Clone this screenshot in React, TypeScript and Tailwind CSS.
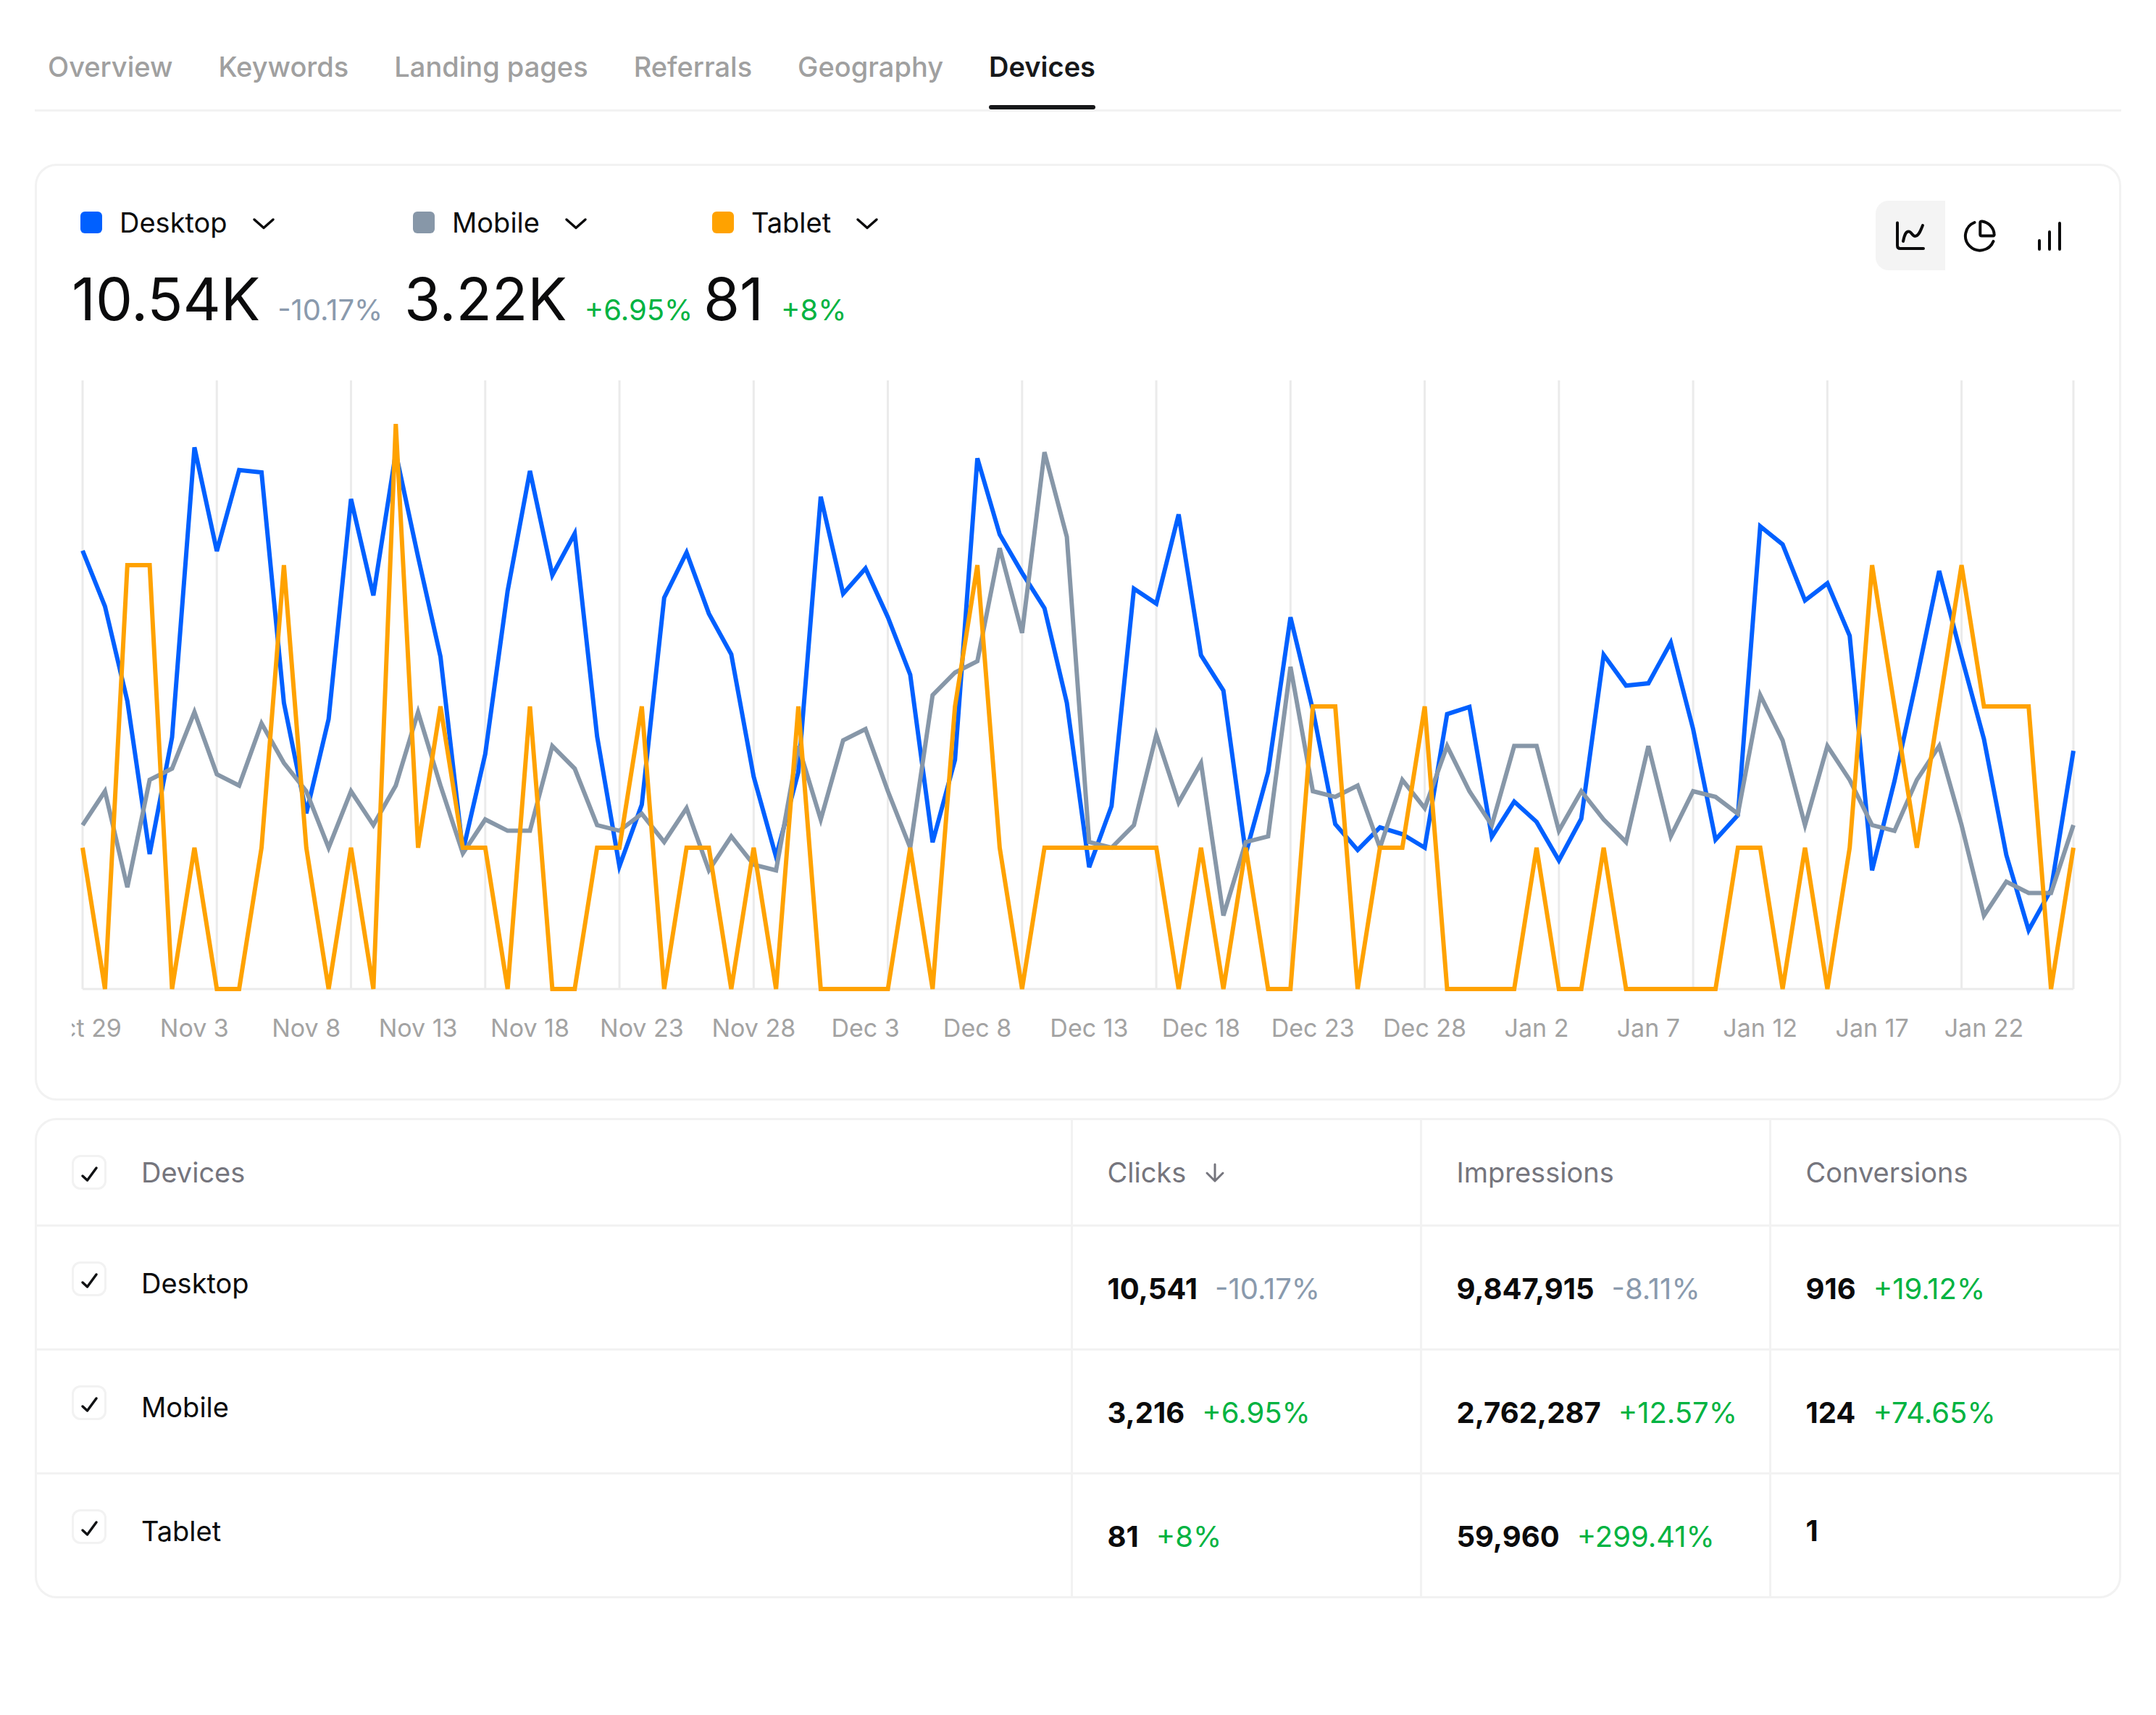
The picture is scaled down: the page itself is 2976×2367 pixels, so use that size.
import React, { useState } from 'react';

interface Series {
    name: string;
    stroke: string;
    max: number;
    values: number[];
}

interface Metric {
    value: string;
    change?: string;
}

interface DeviceRow {
    name: string;
    metrics: Metric[];
}

const tabs = ['Overview', 'Keywords', 'Landing pages', 'Referrals', 'Geography', 'Devices'];

const summary = [
    { name: 'Desktop', swatch: 'bg-[#0060ff]', total: '10.54K', change: '-10.17%' },
    { name: 'Mobile', swatch: 'bg-[#8797a8]', total: '3.22K', change: '+6.95%' },
    { name: 'Tablet', swatch: 'bg-[#ffa200]', total: '81', change: '+8%' },
];

const series: Series[] = [
    {
        name: 'Desktop',
        stroke: '#0060ff',
        max: 1344,
        values: [
            968, 845, 636, 298, 556, 1196, 967, 1146, 1141, 632, 388, 596, 1082, 869, 1184,
            954, 734, 304, 519, 879, 1144, 914, 1006, 558, 271, 407, 864, 964, 829, 739,
            469, 292, 479, 1087, 873, 929, 821, 694, 324, 506, 1172, 1004, 919, 841, 632,
            269, 404, 884, 851, 1048, 737, 659, 299, 479, 821, 616, 364, 307, 357, 342,
            312, 607, 623, 336, 414, 369, 284, 376, 738, 670, 675, 765, 574, 330, 384,
            1022, 982, 858, 896, 780, 262, 459, 686, 923, 734, 552, 296, 130, 219, 526,
        ],
    },
    {
        name: 'Mobile',
        stroke: '#8797a8',
        max: 107.7,
        values: [
            29, 35, 18, 37, 39, 49, 38, 36, 47, 40, 35, 25, 35, 29, 36,
            49, 36, 24, 30, 28, 28, 43, 39, 29, 28, 31, 26, 32, 21, 27,
            22, 21, 43, 30, 44, 46, 35, 25, 52, 56, 58, 78, 63, 95, 80,
            26, 25, 29, 45, 33, 40, 13, 26, 27, 57, 35, 34, 36, 25, 37,
            32, 43, 35, 29, 43, 43, 28, 35, 30, 26, 43, 27, 35, 34, 31,
            52, 44, 29, 43, 37, 29, 28, 37, 43, 29, 13, 19, 17, 17, 29,
        ],
    },
    {
        name: 'Tablet',
        stroke: '#ffa200',
        max: 4.308,
        values: [
            1, 0, 3, 3, 0, 1, 0, 0, 1, 3, 1, 0, 1, 0, 4,
            1, 2, 1, 1, 0, 2, 0, 0, 1, 1, 2, 0, 1, 1, 0,
            1, 0, 2, 0, 0, 0, 0, 1, 0, 2, 3, 1, 0, 1, 1,
            1, 1, 1, 1, 0, 1, 0, 1, 0, 0, 2, 2, 0, 1, 1,
            2, 0, 0, 0, 0, 1, 0, 0, 1, 0, 0, 0, 0, 0, 1,
            1, 0, 1, 0, 1, 3, 2, 1, 2, 3, 2, 2, 2, 0, 1,
        ],
    },
];

// one label for every fifth day
const dayLabels = [
    'Oct 29', 'Nov 3', 'Nov 8', 'Nov 13', 'Nov 18', 'Nov 23', 'Nov 28', 'Dec 3', 'Dec 8',
    'Dec 13', 'Dec 18', 'Dec 23', 'Dec 28', 'Jan 2', 'Jan 7', 'Jan 12', 'Jan 17', 'Jan 22',
];

const columns = ['Clicks', 'Impressions', 'Conversions'];

const rows: DeviceRow[] = [
    {
        name: 'Desktop',
        metrics: [
            { value: '10,541', change: '-10.17%' },
            { value: '9,847,915', change: '-8.11%' },
            { value: '916', change: '+19.12%' },
        ],
    },
    {
        name: 'Mobile',
        metrics: [
            { value: '3,216', change: '+6.95%' },
            { value: '2,762,287', change: '+12.57%' },
            { value: '124', change: '+74.65%' },
        ],
    },
    {
        name: 'Tablet',
        metrics: [
            { value: '81', change: '+8%' },
            { value: '59,960', change: '+299.41%' },
            { value: '1' },
        ],
    },
];

const DAYS = 90;
const LEFT = 15;
const RIGHT = 2763;
const PLOT_HEIGHT = 840;

const xOf = (day: number) => LEFT + (day * (RIGHT - LEFT)) / (DAYS - 1);

const changeColor = (change: string) => (change.startsWith('+') ? 'text-[#00b341]' : 'text-[#8a9aad]');

const LineIcon = () => (
    <svg className="size-12" viewBox="0 0 48 48" fill="none" stroke="currentColor" strokeWidth="4" strokeLinecap="round" strokeLinejoin="round">
        <path d="M6 6.500V38Q6 42 10 42H42" />
        <path d="M14 32C16 22 18 18.500 21.500 18.500C25.500 18.500 26.500 25 30.500 25C35.500 25 38 17 41 10" />
    </svg>
);

const PieIcon = () => (
    <svg className="size-12" viewBox="0 0 48 48" fill="none" stroke="currentColor" strokeWidth="4" strokeLinecap="round" strokeLinejoin="round">
        <path d="M16.500 6A20 20 0 1 0 42.500 32" />
        <path d="M24.300 6.500Q24.300 4.300 27 4.500A19.500 19.500 0 0 1 43.700 22Q44 24.500 42 24.500H26.300Q24.300 24.500 24.300 22.500Z" />
    </svg>
);

const BarsIcon = () => (
    <svg className="size-12" viewBox="0 0 48 48" fill="none" stroke="currentColor" strokeWidth="4" strokeLinecap="round">
        <path d="M10 31V43M24 19V43M38 7V43" />
    </svg>
);

const views = [
    { label: 'Line chart', icon: <LineIcon /> },
    { label: 'Pie chart', icon: <PieIcon /> },
    { label: 'Bar chart', icon: <BarsIcon /> },
];

const Chart: React.FC = () => (
    <svg className="block h-auto w-full overflow-hidden" viewBox="0 0 2778 935" role="img" aria-label="Clicks by device">
        <g stroke="#ebebeb" strokeWidth="3">
            {Array.from({ length: DAYS }, (_, day) => day)
                .filter((day) => day % 6 === 0 || day === DAYS - 1)
                .map((day) => (
                    <line key={day} x1={xOf(day)} x2={xOf(day)} y1="0" y2={PLOT_HEIGHT} />
                ))}
            <line x1={LEFT} x2={RIGHT} y1={PLOT_HEIGHT} y2={PLOT_HEIGHT} />
        </g>
        {series.map((line) => (
            <polyline
                key={line.name}
                fill="none"
                stroke={line.stroke}
                strokeWidth="6"
                points={line.values
                    .map((value, day) => `${xOf(day).toFixed(1)},${(PLOT_HEIGHT * (1 - value / line.max)).toFixed(1)}`)
                    .join(' ')}
            />
        ))}
        <g className="fill-[#a3a3a3] text-[34px]" textAnchor="middle">
            {dayLabels.map((label, index) => (
                <text key={label} x={xOf(index * 5)} y="906">
                    {label}
                </text>
            ))}
        </g>
    </svg>
);

interface CheckboxProps {
    label: string;
    checked: boolean;
    onChange: () => void;
}

const Checkbox: React.FC<CheckboxProps> = ({ label, checked, onChange }) => (
    <span className="grid size-12 shrink-0">
        <input
            type="checkbox"
            aria-label={label}
            checked={checked}
            onChange={onChange}
            className="peer col-start-1 row-start-1 size-12 appearance-none rounded-xl border-3 border-[#f2f2f2] bg-white"
        />
        <svg
            className="pointer-events-none invisible col-start-1 row-start-1 size-12 text-[#111214] peer-checked:visible"
            viewBox="0 0 48 48"
            fill="none"
            stroke="currentColor"
            strokeWidth="3.5"
            strokeLinecap="round"
            strokeLinejoin="round"
        >
            <path d="M15 29L21.500 35L34 18" />
        </svg>
    </span>
);

const App: React.FC = () => {
    const [activeTab, setActiveTab] = useState('Devices');
    const [view, setView] = useState('Line chart');
    const [selected, setSelected] = useState<string[]>(rows.map((row) => row.name));

    const toggle = (name: string) =>
        setSelected(selected.includes(name) ? selected.filter((item) => item !== name) : [...selected, name]);

    const allSelected = selected.length === rows.length;

    return (
        <main className="min-h-screen bg-white px-12 pt-9 font-['Inter',sans-serif] text-[38px] leading-12 text-[#0b0b0c]">
            <nav className="flex gap-[63px] border-b-3 border-[#f2f2f2] px-[18px]">
                {tabs.map((tab) => (
                    <button
                        key={tab}
                        type="button"
                        onClick={() => setActiveTab(tab)}
                        className={
                            tab === activeTab
                                ? 'flex flex-col pt-8 font-semibold text-[#17181a]'
                                : 'flex flex-col pt-8 font-medium text-[#a0a0a0]'
                        }
                    >
                        {tab}
                        <span className={tab === activeTab ? 'mt-[29px] h-[6px] w-full rounded-full bg-[#17181a]' : 'mt-[29px] h-[6px]'} />
                    </button>
                ))}
            </nav>

            <section className="mt-18 rounded-[30px] border-3 border-[#f2f2f2] px-12 pt-12 pb-14">
                <div className="flex items-start justify-between">
                    <div className="grid grid-cols-[459px_413px_auto]">
                        {summary.map((item) => (
                            <div key={item.name}>
                                <button type="button" className="flex items-center px-3 py-1.5">
                                    <span className={`mr-6 size-[30px] rounded-md ${item.swatch}`} />
                                    {item.name}
                                    <svg
                                        className="ml-6 size-12"
                                        viewBox="0 0 48 48"
                                        fill="none"
                                        stroke="currentColor"
                                        strokeWidth="3.5"
                                        strokeLinecap="round"
                                        strokeLinejoin="round"
                                    >
                                        <path d="M13 20L26 31.500L39 20" />
                                    </svg>
                                </button>
                                <div className="mt-7 flex items-baseline gap-6">
                                    <span className="text-[81px] leading-24">{item.total}</span>
                                    <span className={`text-[40px] ${changeColor(item.change)}`}>{item.change}</span>
                                </div>
                            </div>
                        ))}
                    </div>
                    <div className="flex overflow-hidden rounded-[18px]">
                        {views.map((item) => (
                            <button
                                key={item.label}
                                type="button"
                                aria-label={item.label}
                                onClick={() => setView(item.label)}
                                className={item.label === view ? 'bg-[#f4f4f4] p-6' : 'p-6'}
                            >
                                {item.icon}
                            </button>
                        ))}
                    </div>
                </div>
                <div className="mt-16">
                    <Chart />
                </div>
            </section>

            <section className="mt-6 overflow-hidden rounded-[30px] border-3 border-[#f2f2f2]">
                <table className="w-full table-fixed border-collapse text-left">
                    <thead>
                        <tr className="text-[#75757d]">
                            <th className="p-12 font-normal">
                                <div className="flex items-center gap-12">
                                    <Checkbox
                                        label="All devices"
                                        checked={allSelected}
                                        onChange={() => setSelected(allSelected ? [] : rows.map((row) => row.name))}
                                    />
                                    Devices
                                </div>
                            </th>
                            {columns.map((column) => (
                                <th key={column} className="w-[482px] border-l-3 border-[#f2f2f2] p-12 font-normal">
                                    <div className="flex items-center gap-4">
                                        {column}
                                        {column === 'Clicks' && (
                                            <svg
                                                className="size-12"
                                                viewBox="0 0 48 48"
                                                fill="none"
                                                stroke="currentColor"
                                                strokeWidth="3"
                                                strokeLinecap="round"
                                                strokeLinejoin="round"
                                            >
                                                <path d="M24 13V35M13 25L24 36L35 25" />
                                            </svg>
                                        )}
                                    </div>
                                </th>
                            ))}
                        </tr>
                    </thead>
                    <tbody>
                        {rows.map((row) => (
                            <tr key={row.name} className="border-t-3 border-[#f2f2f2] align-top">
                                <td className="px-12 pt-12 pb-[66px]">
                                    <div className="flex items-start gap-12">
                                        <Checkbox
                                            label={row.name}
                                            checked={selected.includes(row.name)}
                                            onChange={() => toggle(row.name)}
                                        />
                                        <span className="pt-1.5">{row.name}</span>
                                    </div>
                                </td>
                                {row.metrics.map((metric, index) => (
                                    <td key={columns[index]} className="border-l-3 border-[#f2f2f2] px-12 pt-12 text-[40px]">
                                        <div className={metric.change ? 'flex gap-6 pt-3.5' : 'flex pt-1.5'}>
                                            <span className="font-bold">{metric.value}</span>
                                            {metric.change && <span className={changeColor(metric.change)}>{metric.change}</span>}
                                        </div>
                                    </td>
                                ))}
                            </tr>
                        ))}
                    </tbody>
                </table>
            </section>
        </main>
    );
};

export default App;
